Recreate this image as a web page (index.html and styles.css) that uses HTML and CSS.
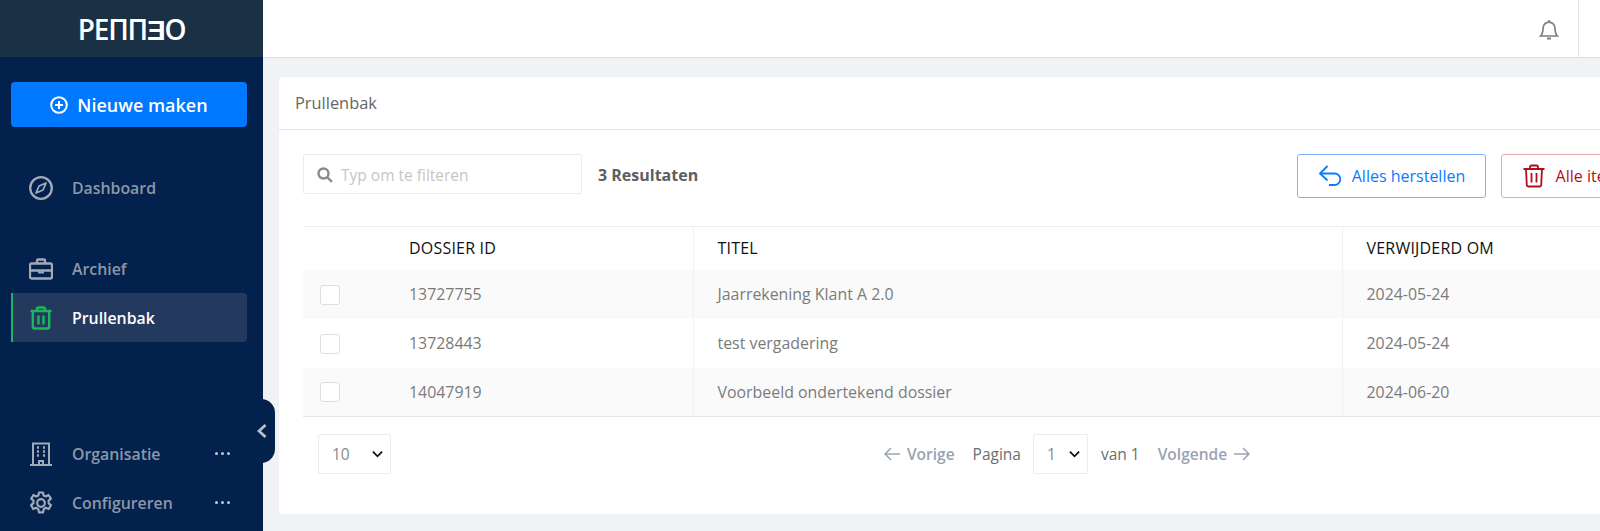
FILE: index.html
```html
<!DOCTYPE html>
<html lang="nl">
<head>
<meta charset="utf-8">
<title>Prullenbak</title>
<link rel="stylesheet" href="styles.css">
</head>
<body>
<div class="app">
  <aside class="sidebar">
    <div class="brand"><span class="wordmark">PEΠΠƎO</span></div>
    <button class="new-btn">
      <svg class="new-icon" viewBox="0 0 18 18" fill="none" stroke="currentColor" stroke-width="2"><circle cx="9" cy="9" r="7.8"/><path d="M9 5v8M5 9h8"/></svg>
      Nieuwe maken
    </button>
    <nav class="nav nav-main">
      <a class="nav-item">
        <svg class="nav-icon" viewBox="0 0 24 24" fill="none" stroke="currentColor" stroke-width="2.300"><circle cx="12" cy="12" r="10.800"/><path d="M17 7l-3 7-7 3 3-7z" stroke-width="1.800" stroke-linejoin="round"/></svg>
        Dashboard
      </a>
    </nav>
    <nav class="nav nav-second">
      <a class="nav-item">
        <svg class="nav-icon" viewBox="0 0 24 24" fill="none" stroke="currentColor" stroke-width="2.300"><rect x="1" y="6.500" width="22" height="15" rx="1.500"/><path d="M8 6.500V3.500a1 1 0 0 1 1-1h6a1 1 0 0 1 1 1v3M1 13.500h22"/><path d="M10 13v2.500h4V13" stroke-width="1.800"/></svg>
        Archief
      </a>
      <a class="nav-item active">
        <svg class="nav-icon" viewBox="0 0 24 24" fill="none" stroke="currentColor" stroke-width="2.400"><path d="M1.500 5h21M3.800 5v15.500a2 2 0 0 0 2 2h12.400a2 2 0 0 0 2-2V5M8 5V3a1.500 1.500 0 0 1 1.500-1.500h5A1.500 1.500 0 0 1 16 3v2M9.500 9.500v9M14.500 9.500v9"/></svg>
        Prullenbak
      </a>
    </nav>
    <nav class="nav nav-bottom">
      <a class="nav-item">
        <svg class="nav-icon" viewBox="0 0 24 24" fill="none" stroke="currentColor" stroke-width="2"><path d="M4 23V1.500h16V23M1 23h22"/><path d="M10 23v-4h4v4"/><path d="M8 5.500h2M14 5.500h2M8 9.500h2M14 9.500h2M8 13.500h2M14 13.500h2" stroke-width="2.400"/></svg>
        Organisatie
        <span class="more"><i></i><i></i><i></i></span>
      </a>
      <a class="nav-item">
        <svg class="nav-icon" viewBox="0 0 24 24" fill="none" stroke="currentColor" stroke-width="2.200"><circle cx="12" cy="12" r="3.800"/><path d="M10 1.500h4l.6 3 2.200 1 2.700-1.500 2.400 3.700-2.300 2 .1 2.600 2.200 1.900-2.200 3.800-2.800-1.200-2.100 1.200-.8 3.400h-4l-.7-3.300-2.200-1.300-2.800 1.200-2.200-3.800 2.300-2 .1-2.500-2.300-2L4.400 4l2.800 1.500 2.200-1z" stroke-linejoin="round"/></svg>
        Configureren
        <span class="more"><i></i><i></i><i></i></span>
      </a>
    </nav>
    <div class="collapse-tab">
      <svg viewBox="0 0 10 14" width="10" height="14" fill="none" stroke="currentColor" stroke-width="2.800"><path d="M8.500 1L2 7l6.500 6"/></svg>
    </div>
  </aside>

  <div class="main">
    <header class="topbar">
      <svg class="bell" viewBox="0 0 20 22" fill="none" stroke="currentColor" stroke-width="1.700"><path d="M10 3.200a6 6 0 0 0-6 6c0 5-1.500 6.800-2.500 7.800h17c-1-1-2.500-2.800-2.500-7.800a6 6 0 0 0-6-6zM10 3.200V1"/><path d="M8 19.500h4" stroke-width="2"/></svg>
    </header>
    <div class="content">
      <section class="card">
        <h1 class="card-title">Prullenbak</h1>
        <div class="toolbar">
          <label class="search">
            <svg class="search-icon" viewBox="0 0 16 16" fill="none" stroke="currentColor" stroke-width="2.400"><circle cx="6.500" cy="6.500" r="5"/><path d="M10.500 10.500L15 15"/></svg>
            <span class="placeholder">Typ om te filteren</span>
          </label>
          <strong class="results">3 Resultaten</strong>
          <div class="actions">
            <button class="btn btn-blue">
              <svg class="btn-icon" viewBox="0 0 24 24" fill="none" stroke="currentColor" stroke-width="1.800"><path d="M9.500 2L2 9.500l7.500 7"/><path d="M2 9.500h14.500a5.500 5.500 0 0 1 0 11.500H11"/></svg>
              Alles herstellen
            </button>
            <button class="btn btn-red">
              <svg class="btn-icon" viewBox="0 0 24 24" fill="none" stroke="currentColor" stroke-width="1.800"><path d="M1.500 5h21M4 5l.8 16a1.500 1.500 0 0 0 1.500 1.500h11.400a1.500 1.500 0 0 0 1.500-1.500L20 5M8 5V3a1.500 1.500 0 0 1 1.500-1.500h5A1.500 1.500 0 0 1 16 3v2M9.500 9v9.500M14.500 9v9.500"/></svg>
              Alle items verwijderen
            </button>
          </div>
        </div>
        <table class="table">
          <colgroup><col class="c-check"><col class="c-id"><col class="c-title"><col class="c-date"></colgroup>
          <thead>
            <tr><th></th><th>DOSSIER ID</th><th class="sep">TITEL</th><th class="sep">VERWIJDERD OM</th></tr>
          </thead>
          <tbody>
            <tr><td><span class="check"></span></td><td>13727755</td><td class="sep">Jaarrekening Klant A 2.0</td><td class="sep">2024-05-24</td></tr>
            <tr><td><span class="check"></span></td><td>13728443</td><td class="sep">test vergadering</td><td class="sep">2024-05-24</td></tr>
            <tr><td><span class="check"></span></td><td>14047919</td><td class="sep">Voorbeeld ondertekend dossier</td><td class="sep">2024-06-20</td></tr>
          </tbody>
        </table>
        <div class="footer">
          <div class="select select-size"><span>10</span><svg class="chev" viewBox="0 0 12 8" fill="none" stroke="currentColor" stroke-width="2"><path d="M1 1.500l5 5 5-5"/></svg></div>
          <div class="pager">
            <span class="pager-link"><svg class="arrow" viewBox="0 0 16 14" fill="none" stroke="currentColor" stroke-width="1.500"><path d="M7 1L1 7l6 6M1 7h15"/></svg>Vorige</span>
            <span class="pager-text first">Pagina</span>
            <div class="select select-page"><span>1</span><svg class="chev" viewBox="0 0 12 8" fill="none" stroke="currentColor" stroke-width="2"><path d="M1 1.500l5 5 5-5"/></svg></div>
            <span class="pager-text">van 1</span>
            <span class="pager-link last">Volgende<svg class="arrow" viewBox="0 0 16 14" fill="none" stroke="currentColor" stroke-width="1.500"><path d="M9 1l6 6-6 6M15 7H0"/></svg></span>
          </div>
        </div>
      </section>
    </div>
  </div>
</div>
</body>
</html>
```
FILE: styles.css
```css
* { box-sizing: border-box; }
html, body { margin: 0; height: 100%; overflow: hidden; }
body { font-family: "Open Sans", "Liberation Sans", sans-serif; font-size: 15px; color: #6d6d6d; background: #f1f2f6; }
.app { display: flex; width: 1600px; height: 531px; overflow: hidden; }

.sidebar { position: relative; flex: 0 0 263px; height: 531px; display: flex; flex-direction: column; background: #02214c; z-index: 2; }
.brand { height: 57px; flex: none; background: #1a3045; display: flex; align-items: center; justify-content: center; }
.wordmark { color: #fff; font-size: 28px; font-weight: 600; line-height: 1; letter-spacing: -1.200px; }
.new-btn { margin: 25px 16px 0 11px; height: 45px; flex: none; border: 0; border-radius: 4px; background: #0078ff; color: #fff; font: 600 18px "Open Sans", sans-serif; display: flex; align-items: center; justify-content: center; gap: 9px; }
.new-icon { width: 18px; height: 18px; }
.nav { display: flex; flex-direction: column; padding: 0 16px 0 11px; }
.nav-main { margin-top: 36px; }
.nav-second { margin-top: 32px; }
.nav-bottom { margin-top: auto; padding-bottom: 4px; }
.nav-item { height: 49px; display: flex; align-items: center; padding-left: 16px; color: #8d97a8; font-size: 15.850px; font-weight: 600; border-left: 2px solid transparent; border-radius: 0 4px 4px 0; }
.nav-item.active { background: #233a5e; border-left-color: #1fb45f; color: #fff; }
.nav-item.active .nav-icon { color: #1fb45f; }
.nav-icon { width: 24px; height: 24px; margin-right: 19px; flex: none; color: #a2aab8; }
.more { margin-left: auto; margin-right: 17px; display: flex; gap: 2.500px; }
.more i { width: 3.500px; height: 3.500px; border-radius: 50%; background: #c3c8d2; }
.collapse-tab { position: absolute; left: 250px; top: 399px; width: 25px; height: 64px; background: #02214c; border-radius: 0 14px 14px 0; display: flex; align-items: center; justify-content: flex-end; padding-right: 8px; color: #b9c0cc; }

.main { flex: 1; min-width: 0; display: flex; flex-direction: column; }
.topbar { height: 58px; flex: none; background: #fff; border-bottom: 1px solid #dcdde0; display: flex; align-items: center; justify-content: flex-end; padding-right: 21px; }
.topbar::after { content: ""; width: 1px; height: 57px; background: #e3e3e3; margin-left: 19px; }
.bell { width: 20px; height: 22px; margin-top: 2px; color: #7f7f7f; }
.content { padding: 19px 0 0 16px; flex: 1; }
.card { width: 1574px; height: 437px; background: #fff; border-radius: 4px; box-shadow: 0 0 2px rgba(0, 0, 0, 0.060); }
.card-title { margin: 0; height: 53px; padding: 0 16px; border-bottom: 1px solid #e6e6e6; font-size: 16.400px; font-weight: 400; line-height: 52px; color: #666; }
.toolbar { display: flex; align-items: flex-start; padding: 24px 112px 0 24px; height: 96px; }
.search { width: 279px; height: 40px; border: 1px solid #ebebeb; border-radius: 2px; display: flex; align-items: center; padding: 1px 0 0 13px; }
.search-icon { width: 16px; height: 16px; color: #8a8a8a; margin-right: 8px; }
.placeholder { color: #c6c6c6; font-size: 15.500px; }
.results { margin-left: 16px; line-height: 42px; font-weight: 700; color: #5e5e5e; font-size: 16px; }
.actions { margin-left: auto; display: flex; gap: 15px; }
.btn { height: 44px; border-radius: 3px; background: #fff; display: flex; align-items: center; justify-content: center; gap: 10px; font: 500 16px "Open Sans", sans-serif; }
.btn-icon { width: 24px; height: 24px; }
.btn-blue { width: 189px; border: 1px solid #7db4fb; color: #0a7bff; }
.btn-red { width: 240px; border: 1px solid #e3a9ae; color: #ae0f1e; }

.table { width: 1526px; margin-left: 24px; border-collapse: collapse; table-layout: fixed; border-top: 1px solid #eee; border-bottom: 1px solid #e6e6e6; }
.c-check { width: 82px; }
.c-id { width: 308px; }
.c-title { width: 649px; }
th { height: 43px; padding: 0 0 0 24px; text-align: left; font-size: 16px; letter-spacing: 0.200px; font-weight: 400; color: #111; background: #fff; }
td { height: 49px; padding: 0 0 0 24px; font-size: 15.900px; color: #7a7a7a; }
tbody tr:nth-child(odd) { background: #fafafa; }
.sep { border-left: 1px solid #f2f2f2; }
td:first-child { padding-left: 17px; }
.check { display: block; width: 20px; height: 20px; margin-top: 1px; background: #fff; border: 1px solid #dedede; border-radius: 3px; }

.footer { display: grid; grid-template-columns: 1fr auto 1fr; align-items: center; padding: 17px 37px 0 39px; }
.select { height: 40px; border: 1px solid #ebebeb; border-radius: 2px; display: flex; align-items: center; font-size: 15.500px; color: #8a8a8a; }
.select-size { width: 73px; padding: 0 7px 0 13px; justify-content: space-between; }
.select-page { width: 55px; padding: 0 7px 0 13px; justify-content: space-between; margin: 0 13px 0 12px; }
.chev { width: 11px; height: 8px; color: #111; }
.pager { display: flex; align-items: center; font-size: 15.500px; }
.pager-link { display: flex; align-items: center; gap: 7px; color: #9aa3b2; font-weight: 600; }
.pager-text { color: #6d6d6d; }
.pager-text.first { margin-left: 18px; }
.pager-link.last { margin-left: 18px; }
.arrow { width: 16px; height: 14px; }
```
